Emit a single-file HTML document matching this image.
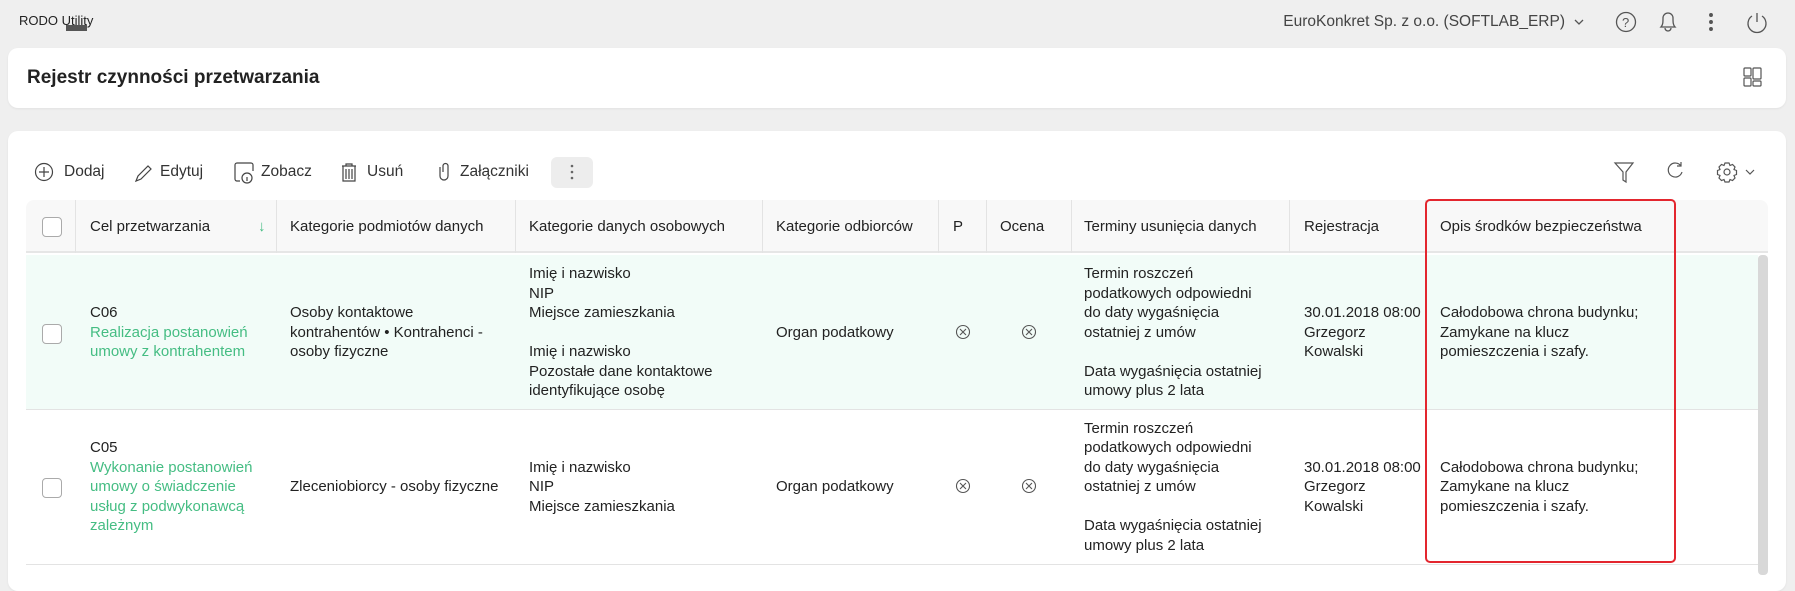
<!DOCTYPE html>
<html><head><meta charset="utf-8">
<style>
*{margin:0;padding:0;box-sizing:border-box}
body{width:1795px;height:572px;overflow:hidden;background:#efefef;font-family:"Liberation Sans",sans-serif;color:#222;position:relative;font-size:15px}
.abs{position:absolute}
.card{position:absolute;background:#fff;border-radius:10px;box-shadow:0 1px 2px rgba(0,0,0,.06)}
svg{position:absolute;overflow:visible}
.tb{position:absolute;top:162px;font-size:15.5px;color:#333;line-height:20px}
.hd{position:absolute;top:200px;height:53px;background:#f8f8f8;border-bottom:2px solid #e6e6e6;left:26px;width:1742px;border-radius:8px 8px 0 0}
.hc{position:absolute;top:217px;font-size:15px;color:#222;line-height:20px}
.vd{position:absolute;top:200px;height:53px;width:1px;background:#e3e3e3}
.cell{position:absolute;font-size:15px;line-height:19.5px;color:#222;display:flex;flex-direction:column;justify-content:center}
.g{color:#45bd83}
.cb{position:absolute;width:20px;height:20px;border:1.5px solid #aaa;border-radius:4px;background:#fff;left:42px}
</style></head><body>
<div class="abs" style="left:19px;top:13px;font-size:13px;color:#222">RODO Utility</div>
<div class="abs" style="left:66px;top:25px;width:21px;height:6px;background:#555"></div>
<div class="abs" style="right:230px;top:13px;font-size:15.5px;color:#444;white-space:nowrap">EuroKonkret Sp. z o.o. (SOFTLAB_ERP)</div>
<svg style="left:0;top:0" width="1795" height="572" fill="none" stroke="#555" stroke-width="1.3">
<path d="M1575 20l4 4 4-4"/>
<circle cx="1626" cy="22" r="9.5"/>
<text x="1622" y="27" font-size="13" fill="#555" stroke="none" font-family="Liberation Sans">?</text>
<path d="M1661 27c2-2 2-5 2-9a5 5 0 0 1 10 0c0 4 0 7 2 9z M1665 28a3 3 0 0 0 6 0"/>
<circle cx="1711" cy="15" r="1.3" fill="#555"/><circle cx="1711" cy="22" r="1.3" fill="#555"/><circle cx="1711" cy="29" r="1.3" fill="#555"/>
<path d="M1757 13v9 M1752 16a9 9 0 1 0 10 0"/>
</svg>
<div class="card" style="left:8px;top:48px;width:1778px;height:60px"></div>
<div class="abs" style="left:27px;top:67px;font-size:19px;font-weight:bold;color:#222">Rejestr czynności przetwarzania</div>
<svg style="left:0;top:0" width="1795" height="572" fill="none" stroke="#555" stroke-width="1.2">
<rect x="1744" y="68" width="7" height="8" rx="1"/><rect x="1753" y="68" width="8" height="11" rx="1"/><rect x="1744" y="78" width="7" height="8" rx="1"/><rect x="1753" y="81" width="8" height="5" rx="1"/>
</svg>
<div class="card" style="left:8px;top:131px;width:1778px;height:460px"></div>
<svg style="left:0;top:0" width="1795" height="572" fill="none" stroke="#444" stroke-width="1.2">
<circle cx="44" cy="172" r="8.5"/><path d="M44 167v10M39 172h10"/>
<path d="M136 181l2-5 10-10 3 3-10 10z"/>
<path d="M240 181h-3a2 2 0 0 1-2-2v-14a2 2 0 0 1 2-2h14a2 2 0 0 1 2 2v6"/><circle cx="247" cy="178" r="5"/><path d="M247 177v4"/>
<path d="M342 166h14M346 166v-2h6v2M343 166v15h12v-15M346 169v10M349 169v10M352 169v10"/>
<path d="M443 172v-6a2.5 2.5 0 0 1 5 0v10a4 4 0 0 1-8 0v-9"/>
</svg>
<div class="tb" style="left:64px">Dodaj</div>
<div class="tb" style="left:160px">Edytuj</div>
<div class="tb" style="left:261px">Zobacz</div>
<div class="tb" style="left:367px">Usuń</div>
<div class="tb" style="left:460px">Załączniki</div>
<div class="abs" style="left:551px;top:157px;width:42px;height:31px;background:#ededed;border-radius:6px"></div>
<svg style="left:0;top:0" width="1795" height="572" fill="#666" stroke="none">
<circle cx="572" cy="166" r="1.3"/><circle cx="572" cy="172" r="1.3"/><circle cx="572" cy="178" r="1.3"/>
</svg>
<svg style="left:0;top:0" width="1795" height="572" fill="none" stroke="#555" stroke-width="1.2">
<path d="M1615 163h18l-7 9v10l-3-2v-8z"/>
<path d="M1681 166a7 7 0 1 0 1 6M1681 162v4h-4"/>
<circle cx="1727" cy="172" r="3"/>
<path d="M1725 163h4l1 2.5 2.5-1 2.5 2.5-1 2.5 2.5 1v4l-2.5 1 1 2.5-2.5 2.5-2.5-1-1 2.5h-4l-1-2.5-2.5 1-2.5-2.5 1-2.5-2.5-1v-4l2.5-1-1-2.5 2.5-2.5 2.5 1z"/>
<path d="M1746 170l4 4 4-4"/>
</svg>
<div class="hd"></div>
<div class="vd" style="left:75px"></div><div class="vd" style="left:276px"></div><div class="vd" style="left:515px"></div><div class="vd" style="left:762px"></div><div class="vd" style="left:938px"></div><div class="vd" style="left:986px"></div><div class="vd" style="left:1071px"></div><div class="vd" style="left:1289px"></div><div class="vd" style="left:1425px"></div>
<div class="cb" style="top:217px"></div>
<div class="hc" style="left:90px">Cel przetwarzania</div>
<div class="hc" style="left:258px;color:#45bd83">↓</div>
<div class="hc" style="left:290px">Kategorie podmiotów danych</div>
<div class="hc" style="left:529px">Kategorie danych osobowych</div>
<div class="hc" style="left:776px">Kategorie odbiorców</div>
<div class="hc" style="left:953px">P</div>
<div class="hc" style="left:1000px">Ocena</div>
<div class="hc" style="left:1084px">Terminy usunięcia danych</div>
<div class="hc" style="left:1304px">Rejestracja</div>
<div class="hc" style="left:1440px">Opis środków bezpieczeństwa</div>
<div class="abs" style="left:26px;top:255px;width:1732px;height:155px;background:#f2fcf8;border-bottom:1px solid #e3e3e3"></div>
<div class="abs" style="left:26px;top:564px;width:1732px;height:1px;background:#e3e3e3"></div>
<div class="abs" style="left:1758px;top:255px;width:10px;height:320px;background:#d8d8d8;border-radius:4px"></div>
<div class="cb" style="top:324px"></div>
<div class="cell" style="left:90px;top:255px;height:155px">C06<span class="g">Realizacja postanowień<br>umowy z kontrahentem</span></div>
<div class="cell" style="left:290px;top:255px;height:155px">Osoby kontaktowe<br>kontrahentów • Kontrahenci -<br>osoby fizyczne</div>
<div class="cell" style="left:529px;top:255px;height:155px">Imię i nazwisko<br>NIP<br>Miejsce zamieszkania<br><br>Imię i nazwisko<br>Pozostałe dane kontaktowe<br>identyfikujące osobę</div>
<div class="cell" style="left:776px;top:255px;height:155px">Organ podatkowy</div>
<div class="cell" style="left:1084px;top:255px;height:155px">Termin roszczeń<br>podatkowych odpowiedni<br>do daty wygaśnięcia<br>ostatniej z umów<br><br>Data wygaśnięcia ostatniej<br>umowy plus 2 lata</div>
<div class="cell" style="left:1304px;top:255px;height:155px">30.01.2018 08:00<br>Grzegorz<br>Kowalski</div>
<div class="cell" style="left:1440px;top:255px;height:155px">Całodobowa chrona budynku;<br>Zamykane na klucz<br>pomieszczenia i szafy.</div>
<div class="cb" style="top:478px"></div>
<div class="cell" style="left:90px;top:410px;height:154px">C05<span class="g">Wykonanie postanowień<br>umowy o świadczenie<br>usług z podwykonawcą<br>zależnym</span></div>
<div class="cell" style="left:290px;top:410px;height:154px">Zleceniobiorcy - osoby fizyczne</div>
<div class="cell" style="left:529px;top:410px;height:154px">Imię i nazwisko<br>NIP<br>Miejsce zamieszkania</div>
<div class="cell" style="left:776px;top:410px;height:154px">Organ podatkowy</div>
<div class="cell" style="left:1084px;top:410px;height:154px">Termin roszczeń<br>podatkowych odpowiedni<br>do daty wygaśnięcia<br>ostatniej z umów<br><br>Data wygaśnięcia ostatniej<br>umowy plus 2 lata</div>
<div class="cell" style="left:1304px;top:410px;height:154px">30.01.2018 08:00<br>Grzegorz<br>Kowalski</div>
<div class="cell" style="left:1440px;top:410px;height:154px">Całodobowa chrona budynku;<br>Zamykane na klucz<br>pomieszczenia i szafy.</div>
<svg style="left:0;top:0" width="1795" height="572" fill="none" stroke="#555" stroke-width="1.1">
<circle cx="963" cy="332" r="6.5"/><path d="M960 329l6 6M966 329l-6 6"/>
<circle cx="1029" cy="332" r="6.5"/><path d="M1026 329l6 6M1032 329l-6 6"/>
<circle cx="963" cy="486" r="6.5"/><path d="M960 483l6 6M966 483l-6 6"/>
<circle cx="1029" cy="486" r="6.5"/><path d="M1026 483l6 6M1032 483l-6 6"/>
</svg>
<div class="abs" style="left:1425px;top:199px;width:251px;height:364px;border:2px solid #e3262e;border-radius:5px"></div>
</body></html>
